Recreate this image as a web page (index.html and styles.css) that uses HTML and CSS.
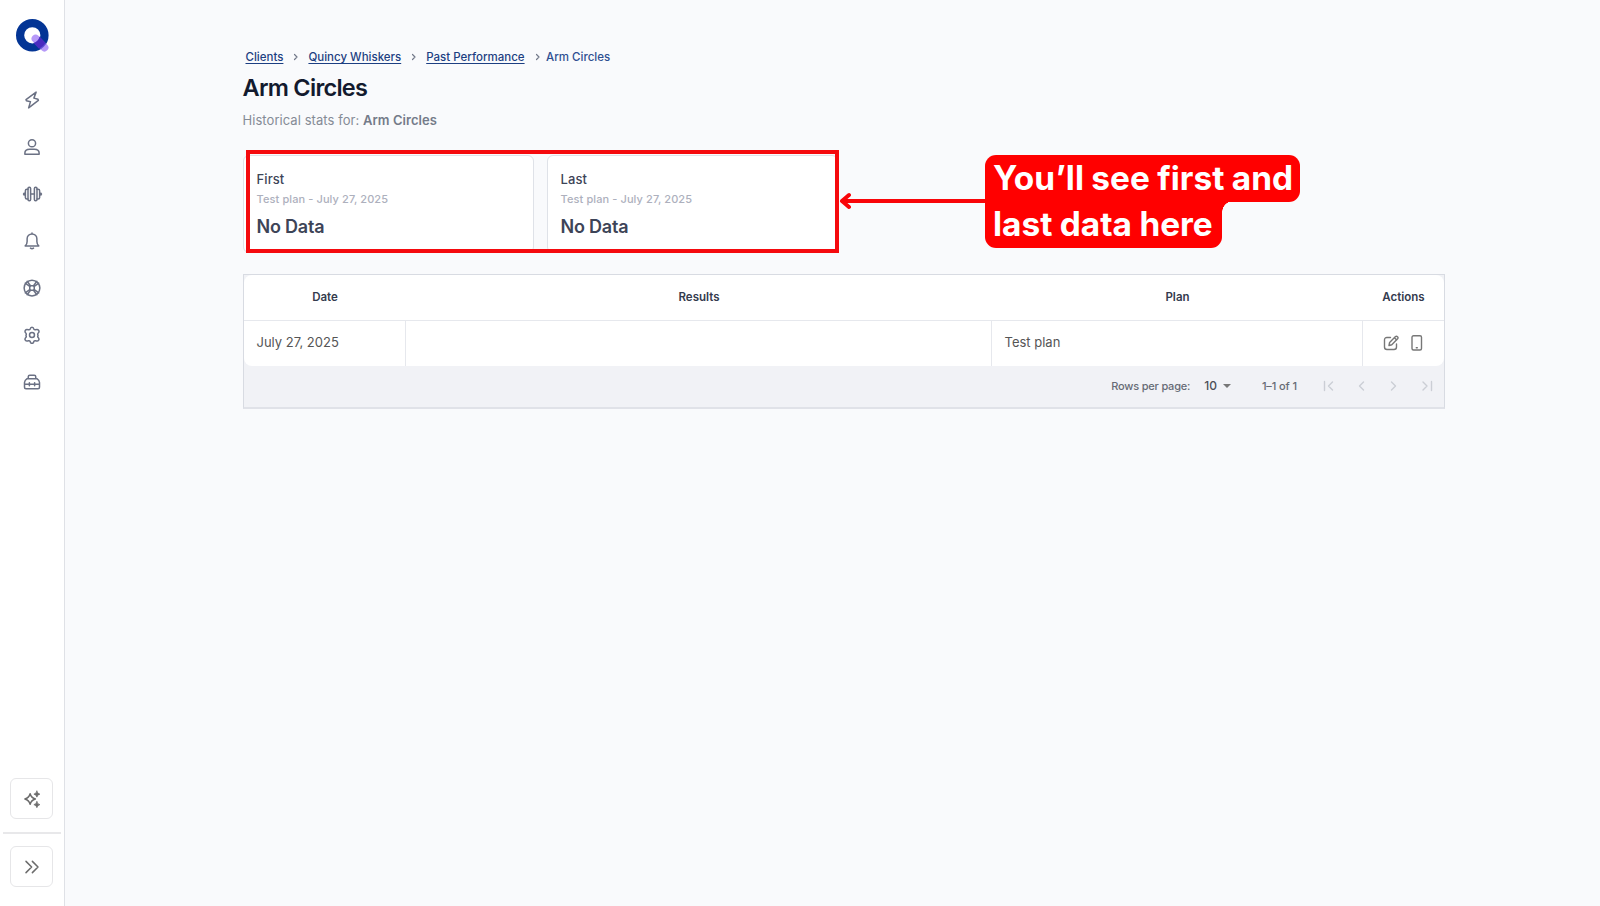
FILE: index.html
```html
<!DOCTYPE html>
<html lang="en">
<head>
    <meta charset="UTF-8">
    <meta name="viewport" content="width=device-width, initial-scale=1.0">
    <title>Arm Circles</title>
    <link rel="stylesheet" href="styles.css">
</head>
<body>
    <div class="app">
        <aside class="sidebar">
            <svg class="logo" viewBox="0 0 34 34">
                <circle cx="16.3" cy="16.3" r="12.2" fill="none" stroke="#033595" stroke-width="8.2"/>
                <path d="M19.6 19.7 28.4 28.5" stroke="#8f63f4" stroke-opacity=".65" stroke-width="8" stroke-linecap="round"/>
                <path d="M23.5 17.6a8 8 0 0 1-6 6.3l5.5 5.9a15 15 0 0 0 6.600-5.700z" fill="#4a2bc0"/>
            </svg>
            <nav class="menu">
                <a href="#"><svg viewBox="0 0 24 24"><path d="M17.500 1.500 4 11.500 4.500 13l5.500 1.200L7.500 22.500 20.500 12.500 20 11l-5.500-1.500z"/></svg></a>
                <a href="#"><svg viewBox="0 0 24 24"><circle cx="12" cy="7" r="4.800"/><path d="M2.500 21.500v-1.500C2.500 16.500 6 15 9 15h6c3 0 6.500 1.500 6.500 5v1.500z"/></svg></a>
                <a href="#"><svg class="wide" viewBox="0 0 28 24"><rect x="8" y="3" width="3.500" height="18" rx="1.600"/><rect x="16.500" y="3" width="3.500" height="18" rx="1.600"/><path d="M11.500 12h5M8 5.500H6.500Q4.500 5.500 4.500 7.500v9q0 2 2 2H8M20 5.500h1.500q2 0 2 2v9q0 2-2 2H20M4.500 10.500Q2 10.500 2 12t2.500 1.500M23.500 10.500Q26 10.500 26 12t-2.500 1.500"/></svg></a>
                <a href="#"><svg viewBox="0 0 24 24"><path d="M3 18.500h18c-1.500-1.500-2.500-3-2.500-6V9a6.500 6.500 0 0 0-13 0v3.500c0 3-1 4.500-2.500 6zM12 2.500V1.300M10 21.500q2 1.600 4 0"/></svg></a>
                <a href="#"><svg viewBox="0 0 24 24"><circle cx="12" cy="12" r="10.500"/><rect x="9" y="9" width="6" height="6" rx="1"/><path d="M3 5.500 9 10M5.500 3 10 9M18.500 3 14 9M21 5.500 15 10M3 18.500 9 14M5.500 21 10 15M18.500 21 14 15M21 18.500 15 14"/></svg></a>
                <a href="#"><svg viewBox="0 0 24 24"><path d="M9.500 4.300Q10 1.600 12 1.600t2.500 2.700q.5 1 2.200.8 3-1 4.200.8t-.9 3.800q-.8 1.300 0 2.500v.6q-.8 1.200 0 2.300 2 2 .9 3.800t-4.200.8q-1.700-.2-2.200.8-.5 2.700-2.500 2.700t-2.500-2.700q-.5-1-2.200-.8-3 1-4.200-.8T4 15.100q.8-1.100 0-2.300v-.6q.8-1.200 0-2.500Q2 7.700 3.100 5.900t4.200-.8q1.700.2 2.200-.8z"/><circle cx="12" cy="12" r="3.300"/></svg></a>
                <a href="#"><svg viewBox="0 0 24 24"><path d="M7 7.500V5q0-2 2-2h6q2 0 2 2v2.500M5.500 7.500h13q3.500 2.500 3.500 5V19q0 2-2 2H4q-2 0-2-2v-6.500q0-2.500 3.500-5zM2 15h20M8.500 13v4M15.500 13v4"/></svg></a>
            </nav>
            <div class="sidebar-bottom">
                <button class="side-btn"><svg viewBox="0 0 24 24"><path d="M9.500 5Q11 10.500 16.500 12 11 13.500 9.500 19 8 13.500 2.500 12 8 10.500 9.500 5z"/><path class="solid" d="M18.500 1.500Q19 5 22.500 5.500 19 6 18.500 9.500 18 6 14.500 5.500 18 5 18.500 1.500zM18.500 15.500Q19 19 22.500 19.500 19 20 18.500 23.500 18 20 14.500 19.500 18 19 18.500 15.500z"/></svg></button>
                <hr>
                <button class="side-btn"><svg viewBox="0 0 24 24"><path d="m4 4.500 7.500 7.500L4 19.500M12.500 4.500 20 12l-7.500 7.500"/></svg></button>
            </div>
        </aside>

        <main class="content">
            <div class="breadcrumbs">
                <a href="#">Clients</a>
                <svg viewBox="0 0 6 8"><path d="M1.500 1.500 4 4l-2.500 2.500"/></svg>
                <a href="#">Quincy Whiskers</a>
                <svg viewBox="0 0 6 8"><path d="M1.500 1.500 4 4l-2.500 2.500"/></svg>
                <a href="#">Past Performance</a>
                <svg viewBox="0 0 6 8"><path d="M1.500 1.500 4 4l-2.500 2.500"/></svg>
                <span>Arm Circles</span>
            </div>
            <h1>Arm Circles</h1>
            <p class="subtitle">Historical stats for: <b>Arm Circles</b></p>

            <div class="cards">
                <div class="card">
                    <div class="card-title">First</div>
                    <div class="card-plan">Test plan - July 27, 2025</div>
                    <div class="card-value">No Data</div>
                </div>
                <div class="card">
                    <div class="card-title">Last</div>
                    <div class="card-plan">Test plan - July 27, 2025</div>
                    <div class="card-value">No Data</div>
                </div>
                <div class="highlight"></div>
                <svg class="arrow" viewBox="0 0 148 18"><path d="M148 9H3M10 3 3 9l7 6"/></svg>
                <div class="callout">
                    <div class="line">You’ll see first and</div>
                    <div class="line second">last data here</div>
                </div>
            </div>

            <div class="table-box">
                <div class="table">
                    <div class="row head">
                        <div>Date</div>
                        <div>Results</div>
                        <div>Plan</div>
                        <div>Actions</div>
                    </div>
                    <div class="row">
                        <div>July 27, 2025</div>
                        <div></div>
                        <div>Test plan</div>
                        <div class="actions">
                            <svg viewBox="0 0 16 16"><path d="M7.500 2.500H4Q1.500 2.500 1.500 5v7q0 2.500 2.500 2.500h7q2.500 0 2.500-2.500V9M6 10.500l.6-3L12.500 1.600q1-.8 2 .1t.1 2L8.800 9.800zM11.500 2.800l2.100 2.100"/></svg>
                            <svg viewBox="0 0 16 16"><rect x="3" y=".8" width="9.500" height="14.200" rx="1.500"/><path d="M7.300 12.800h1"/></svg>
                        </div>
                    </div>
                </div>
                <div class="pager">
                    <span class="label">Rows per page:</span>
                    <span class="size">10</span>
                    <span class="caret"></span>
                    <span class="range">1–1 of 1</span>
                    <div class="arrows">
                        <svg viewBox="0 0 12 12"><path d="M1.500 1.500v9M9.500 2 5.500 6l4 4"/></svg>
                        <svg viewBox="0 0 12 12"><path d="M7.500 2 3.500 6l4 4"/></svg>
                        <svg viewBox="0 0 12 12"><path d="M3.500 2 7.500 6l-4 4"/></svg>
                        <svg viewBox="0 0 12 12"><path d="M10.500 1.500v9M2 2l4 4-4 4"/></svg>
                    </div>
                </div>
            </div>
        </main>
    </div>
</body>
</html>
```
FILE: styles.css
```css
* {box-sizing:border-box;}
body {margin:0; background:#f9fafc; font-family:Inter, "Liberation Sans", sans-serif; color:#3d4457;}
svg {fill:none; stroke:currentColor; stroke-linecap:round; stroke-linejoin:round; display:block;}
.app {display:flex; height:906px;}

/* sidebar */
.sidebar {width:65px; background:#fff; border-right:1px solid #dfe1e6; display:flex; flex-direction:column; align-items:center; padding-top:19px;}
.logo {width:34px; height:34px; margin-left:2px; stroke-width:0;}
.menu {display:flex; flex-direction:column; margin-top:23.500px;}
.menu a {height:47px; width:64px; display:flex; align-items:center; justify-content:center; color:#6b7184;}
.menu svg {width:18px; height:18px; stroke-width:2;}
.menu svg.wide {width:21px;}
.sidebar-bottom {margin-top:auto; padding-bottom:19px; width:100%;}
.side-btn {display:flex; align-items:center; justify-content:center; width:43px; height:41px; margin-left:10px; padding:0; background:#fff; border:1px solid #e6e6e8; border-radius:6px; color:#6c6c6c;}
.side-btn svg {width:18px; height:18px; stroke-width:2;}
.side-btn .solid {fill:currentColor; stroke-width:1;}
.sidebar hr {margin:13px 3px 12px; border:0; height:2px; background:#e8e8ea;}

/* header */
.content {flex:1; padding:48px 155px 0 178px;}
.breadcrumbs {display:flex; align-items:center; height:18px; padding-left:2.500px; font-size:11.500px; font-weight:500; color:#2e4f91;}
.breadcrumbs a {color:#1d3f82; text-decoration:underline; text-underline-offset:1.500px;}
.breadcrumbs svg {width:6px; height:8px; margin:0 9px 0 10px; stroke-width:1.200; color:#73798a;}
.breadcrumbs svg:last-of-type {margin-right:5.500px;}
h1 {margin:6px 0 0 -0.500px; font-size:23.500px; line-height:32px; font-weight:600; letter-spacing:-0.720px; color:#131a2e;}
.subtitle {margin:7px 0 0 -0.500px; font-size:13px; line-height:18px; letter-spacing:0.060px; color:#858b96;}
.subtitle b {font-weight:600; color:#747b89;}

/* cards */
.cards {display:flex; gap:13px; margin-top:26px; position:relative;}
.card {width:291px; height:98px; background:#fff; border:1px solid #dfe2e8; border-radius:6px; padding:14px 12.500px;}
.card-title {font-size:13px; line-height:18px; font-weight:500; letter-spacing:0.100px;}
.card-plan {font-size:11px; line-height:16px; margin-top:3px; font-weight:500; letter-spacing:0.100px; color:#adb0bd;}
.card-value {font-size:18px; line-height:26px; margin-top:7px; font-weight:600; letter-spacing:-0.200px;}

/* annotation over the cards */
.highlight {position:absolute; left:3px; top:-5px; width:593px; height:103px; border:4px solid #f50a0e;}
.arrow {position:absolute; left:595.500px; top:37px; width:148px; height:18px; color:#f90509; stroke-width:4;}
.callout {position:absolute; left:742px; top:0; color:#fff; font-size:33.400px; font-weight:700; line-height:47px; word-spacing:-0.500px;}
.callout .line {width:315px; height:47px; padding-left:8px; background:#f00; border-radius:11px 11px 11px 0; white-space:nowrap;}
.callout .second {position:relative; width:237px; margin-top:-1px; border-radius:0 0 11px 11px; line-height:47px;}
.callout .second::after {content:""; position:absolute; left:100%; top:0; width:11px; height:11px; background:radial-gradient(circle at 100% 100%, transparent 10.500px, #f00 11px);}

/* table */
.table-box {margin-top:21px; width:1202px; height:135px; border:1px solid #d8dbe2; border-bottom:2px solid #e0e2e8; background:#f1f2f6;}
.table {background:#fff; border-radius:8px; overflow:hidden;}
.row {display:grid; grid-template-columns:162px 586px 371px 1fr; height:45px; font-size:13px; color:#555;}
.row > div {display:flex; align-items:center; padding:0 0 3px 12.500px; border-right:1px solid #e6e8ed;}
.row > div:last-child {border-right:0;}
.head {height:46px; font-size:11.500px; font-weight:600; color:#343b4e; border-bottom:1px solid #e6e8ed;}
.head > div {justify-content:center; padding:0 0 2px; border:0;}
.row .actions {gap:10px; padding:0 0 2px 20px; color:#777;}
.actions svg {width:16px; height:16px; stroke-width:1.400;}
.pager {display:flex; align-items:center; height:41px; font-size:11px; font-weight:500; color:#666b75; padding:0 11.500px 2px 0;}
.label {margin-left:auto; letter-spacing:-0.200px;}
.size {margin-left:14px; font-size:12px; color:#4d4f57;}
.caret {margin-left:6px; border:4px solid transparent; border-top-color:#777; border-bottom:0;}
.range {margin-left:31px; letter-spacing:-0.100px;}
.arrows {display:flex; gap:20.500px; margin-left:26px; color:#cbced5;}
.arrows svg {width:12px; height:12px; stroke-width:1.400;}
```
